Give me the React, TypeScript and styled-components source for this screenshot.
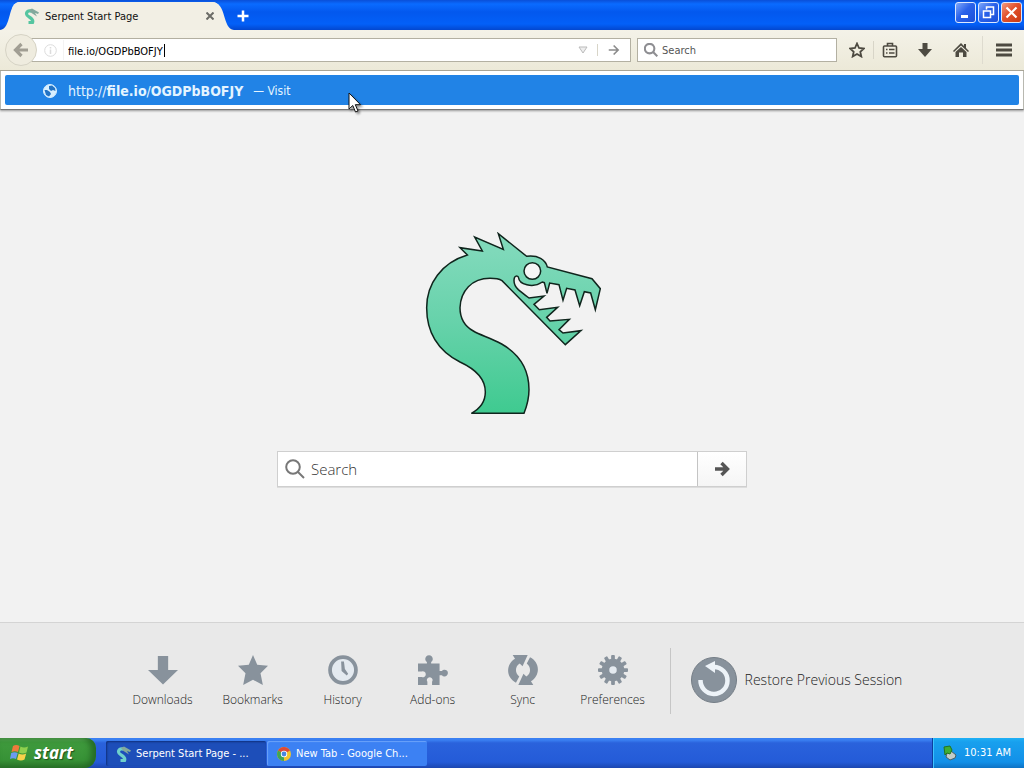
import React from "react";
import styled, { createGlobalStyle, css } from "styled-components";

const GlobalStyle = createGlobalStyle`
  *, *::before, *::after { box-sizing: border-box; }
  body { margin: 0; background: #f2f2f2; }
  button, input { font: inherit; color: inherit; border: 0; padding: 0; margin: 0; background: none; outline: 0; }
  svg { display: block; flex: none; }
`;

const Screen = styled.div`
  min-height: 100vh;
  display: flex;
  flex-direction: column;
  overflow: hidden;
  font: 11px/14px "DejaVu Sans Condensed", "Noto Sans", sans-serif;
  color: #111;
`;

/* Title bar and tabs */

const TitleBar = styled.header`
  height: 30px;
  display: flex;
  align-items: flex-end;
  background: linear-gradient(#0a4fd8 0, #0a6bff 4px, #0358ee 12px, #0360f8 24px, #0347cf 30px);
`;

const Tab = styled.div`
  position: relative;
  z-index: 0;
  height: 28px;
  width: 208px;
  margin-left: 12px;
  padding-left: 12px;
  display: flex;
  align-items: center;
  gap: 6px;
  background: #f2efe4;
  border-radius: 8px 8px 0 0;
`;

const TabEdge = styled.svg<{ $side: "left" | "right" }>`
  position: absolute;
  z-index: -1;
  bottom: 0;
  ${(p) => (p.$side === "left" ? "left: -12px;" : "right: -14px; transform: scaleX(-1);")}
`;

const TabTitle = styled.span`
  flex: 1;
  padding-top: 1px;
  white-space: nowrap;
`;

const IconButton = styled.button<{ $w?: number }>`
  width: ${(p) => p.$w ?? 20}px;
  height: 28px;
  display: flex;
  align-items: center;
  justify-content: center;
`;

const NewTab = styled(IconButton)`
  margin-left: 12px;
  width: 22px;
`;

const MenuButton = styled(IconButton)`
  width: 42px;
  margin-left: 4px;
  border-left: 1px solid #dedbcf;
`;

const WindowButtons = styled.div`
  margin: 0 2px 7px auto;
  display: flex;
  gap: 2px;
`;

const WindowButton = styled.button<{ $close?: boolean }>`
  width: 21px;
  height: 21px;
  display: grid;
  place-items: center;
  border: 1px solid #dce8ff;
  border-radius: 3px;
  background: ${(p) =>
    p.$close
      ? "linear-gradient(135deg, #f09a80, #e2512c 45%, #c93a14)"
      : "linear-gradient(135deg, #7fa8fa, #2a62ea 45%, #1c4fd8)"};
`;

/* Navigation toolbar */

const Toolbar = styled.nav`
  position: relative;
  z-index: 2;
  height: 41px;
  padding-left: 5px;
  display: flex;
  align-items: center;
  background: linear-gradient(#f4f2e8, #ece9d8);
  border-bottom: 1px solid #a9a596;
`;

const BackButton = styled.button`
  position: relative;
  z-index: 1;
  width: 32px;
  height: 32px;
  display: grid;
  place-items: center;
  background: #efecdf;
  border: 1px solid #d6d3c5;
  border-radius: 50%;
`;

const fieldBox = css`
  height: 24px;
  display: flex;
  align-items: center;
  background: #fff;
  border: 1px solid #b3b0a2;
`;

const UrlBar = styled.div`
  ${fieldBox}
  flex: 1;
  margin-left: -6px;
  padding-left: 12px;
`;

const UrlInput = styled.input`
  field-sizing: content;
  margin-left: 6px;
  padding: 2px 1px 0 4px;
  height: 20px;
  border-left: 1px solid #f3f3f3;
  color: #000;
`;

const Caret = styled.span`
  width: 1px;
  height: 13px;
  margin-right: auto;
  background: #000;
`;

const Rule = styled.span<{ $h: number }>`
  width: 1px;
  height: ${(p) => p.$h}px;
  background: #d8d5c8;
`;

const SearchBar = styled.label`
  ${fieldBox}
  width: 200px;
  margin: 0 4px 0 6px;
  padding-left: 6px;
  gap: 4px;

  input { flex: 1; min-width: 0; padding-top: 2px; }
  input::placeholder { color: #555; opacity: 1; }
`;

/* Suggestion popup under the address bar */

const Popup = styled.div`
  position: absolute;
  top: 41px;
  left: 0;
  right: 0;
  padding: 4px;
  background: #fff;
  border: 1px solid #b8b8b0;
  border-top: 0;
  border-bottom-color: #777;
  box-shadow: 0 1px 2px #999;
`;

const Suggestion = styled.a`
  height: 30px;
  padding: 2px 0 0 37px;
  display: flex;
  align-items: center;
  background: #2183e6;
  border-radius: 2px;
  color: #e4f4ff;
  text-decoration: none;
  font-size: 14px;
  line-height: 18px;
`;

const SuggestionUrl = styled.span`
  margin-left: 10px;
`;

const SuggestionAction = styled.span`
  margin-left: 10px;
  font-size: 12px;
`;

/* Start page */

const Main = styled.main`
  flex: 1;
  padding: 161px 16px 24px;
  display: flex;
  flex-direction: column;
  align-items: center;
  background: #f2f2f2;
  font-family: "Open Sans", "Noto Sans", sans-serif;
`;

const SearchForm = styled.form`
  width: 100%;
  max-width: 470px;
  height: 36px;
  margin-top: 36px;
  display: flex;
  background: #fff;
  border: 1px solid #cfcfcf;
  box-shadow: 0 1px 0 #ddd;
`;

const SearchLabel = styled.label`
  flex: 1;
  padding-left: 7px;
  display: flex;
  align-items: center;
  gap: 6px;
  font-size: 15px;
  font-weight: 300;

  input { flex: 1; min-width: 0; height: 32px; }
  input::placeholder { color: #333; opacity: 1; }
`;

const SubmitButton = styled.button`
  width: 49px;
  display: grid;
  place-items: center;
  border-left: 1px solid #c4c4c4;
  background: linear-gradient(#fff, #f5f5f5);
`;

const Launcher = styled.footer`
  height: 116px;
  display: flex;
  justify-content: center;
  align-items: center;
  background: #e9e9e9;
  border-top: 1px solid #d4d4d4;
  color: #222;
  font-family: "Open Sans", "Noto Sans", sans-serif;
  font-weight: 300;
`;

const LaunchButton = styled.button`
  width: 90px;
  padding-top: 2px;
  display: flex;
  flex-direction: column;
  align-items: center;
  gap: 6px;
  font-size: 12px;
  line-height: 18px;
`;

const Restore = styled.button`
  height: 66px;
  margin-left: 12px;
  padding: 0 4px 2px 20px;
  display: flex;
  align-items: center;
  gap: 8px;
  border-left: 1px solid #c6c6c6;
  font-size: 14px;
  line-height: 18px;
  white-space: nowrap;
`;

/* Taskbar */

const Taskbar = styled.div`
  height: 30px;
  display: flex;
  color: #fff;
  background: linear-gradient(#3a80f2 0, #3a80f2 2px, #2a62dc 5px, #245bd8 24px, #1c46b0 30px);
`;

const StartButton = styled.button`
  width: 96px;
  margin-right: 10px;
  padding-left: 10px;
  display: flex;
  align-items: center;
  gap: 4px;
  border-radius: 0 10px 12px 0;
  background: linear-gradient(#5fae5c 0, #3f9a3d 4px, #379236 22px, #2a7429 30px);
  box-shadow: inset -5px 0 6px #256b24;
  font: italic bold 17px/24px "Open Sans", "Noto Sans", sans-serif;
  text-shadow: 1px 1px 1px #1d4f1c;
`;

const Task = styled.button<{ $active?: boolean }>`
  width: 160px;
  height: 25px;
  margin: 3px 1px 0 0;
  padding: 0 8px 0 10px;
  display: flex;
  align-items: center;
  gap: 5px;
  border-radius: 2px;
  white-space: nowrap;
  background: ${(p) => (p.$active ? "#1d4eb9" : "#3c81f3")};
  box-shadow: ${(p) => (p.$active ? "inset 1px 1px 2px #10307c" : "inset 1px 1px 1px #6ba2fa")};
`;

const Tray = styled.div`
  min-width: 92px;
  margin-left: auto;
  padding: 0 12px 0 10px;
  display: flex;
  align-items: center;
  gap: 7px;
  white-space: nowrap;
  border-left: 1px solid #0d3f9e;
  background: linear-gradient(#1eb0f5 0, #18a0ee 4px, #1290e8 24px, #0e72c4 30px);
  box-shadow: inset 1px 0 0 #3cc3ff;
`;

const Pointer = styled.svg`
  position: absolute;
  z-index: 3;
  top: 92px;
  left: 348px;
  filter: drop-shadow(2px 2px 1px #0006);
`;

const SERPENT =
  "M184 579H342C351 556 357 538 357 508C357 438 322 398 275 371C240 351 213 346 190 332C160 315 150 291 150 262C152 212 185 174 240 174C254 174 266 175 276 181L466 373L513 331L459 338L447 328L478 297L420 302L410 291L443 261L388 268L372 252L402 227L357 233C345 225 335 216 325 208C312 196 310 186 313 173C315 165 325 165 326 173C327 190 367 206 397 185L403 187L411 219L419 188L447 193L459 240L470 204L495 209L509 256L523 214L542 218L556 268L571 205L546 175L412 140C406 118 385 104 350 108L265 40L280 87L194 50L217 92L150 82L172 104C95 127 50 190 50 262C50 342 90 394 150 425C202 449 226 480 226 515C226 544 208 566 184 579Z";

const SerpentLogo = () => (
  <svg width="178" height="183" viewBox="39 35 534 549" role="img" aria-label="Serpent">
    <defs>
      <linearGradient id="scales" x1="0" y1="0" x2="0" y2="1">
        <stop offset="0.1" stopColor="#7fd9ba" />
        <stop offset="0.5" stopColor="#66d2aa" />
        <stop offset="1" stopColor="#3fca90" />
      </linearGradient>
    </defs>
    <path d={SERPENT} fill="url(#scales)" stroke="#10251d" strokeWidth="4.5" />
    <circle cx="367" cy="152" r="25" fill="#f6f6f6" stroke="#10251d" strokeWidth="4.5" />
  </svg>
);

const MiniSerpent = ({ color }: { color: string }) => (
  <svg width="15" height="16" viewBox="0 0 15 16">
    <path d="M4.500 14.500H8.500C10.500 10 2.500 9 2.500 6C2.500 3 6 2 8 3.500" fill="none" stroke={color} strokeWidth="3.200" />
    <path d="M5 2L8 .5L15 4.500L14 6L11 5L13 8.500L7.500 5Z" fill="#83a99c" />
  </svg>
);

const Magnifier = ({ size, color, w }: { size: number; color: string; w: number }) => (
  <svg width={size} height={size} viewBox="0 0 20 20" fill="none" stroke={color} strokeWidth={w}>
    <circle cx="8" cy="8" r="6.800" />
    <path d="M13 13L19 19" />
  </svg>
);

const Arrow = ({ size, color, w, flip }: { size: number; color: string; w: number; flip?: boolean }) => (
  <svg width={size} height={size} viewBox="0 0 16 16" fill="none" stroke={color} strokeWidth={w}>
    <path d={flip ? "M15 8H3M8.500 2L2.500 8L8.500 14" : "M1 8H13M7.500 2L13.500 8L7.500 14"} />
  </svg>
);

const ink = "#4d4a41";
const slate = "#88929c";

const gearTeeth = Array.from({ length: 12 }, (_, i) => i * 30);

const syncHalf = "M5 0H21L15.500 12L12.500 9C7.500 12 7 19 12 23L8.500 29.500C-2.500 24-2.500 10 7.500 4Z";

const launchers: { label: string; icon: React.ReactNode }[] = [
  { label: "Downloads", icon: <path d="M10.500 1H21.500V16H32L16 31.500L0 16H10.500Z" /> },
  { label: "Bookmarks", icon: <path d="M16 0L20.500 10.500L32 11.500L24 19.500L26.500 32L16 26.500L5.500 32L8 19.500L0 11.500L11.500 10.500Z" /> },
  {
    label: "History",
    icon: (
      <>
        <circle cx="16" cy="16" r="13.800" fill="#e4eaf0" stroke={slate} strokeWidth="4" />
        <path d="M14 7H17L18 15L21.500 20L20 21.800L14.500 17Z" />
      </>
    ),
  },
  {
    label: "Add-ons",
    icon: (
      <path d="M0 9H9.500V7.500A4 4 0 1 1 14 7.500V9H23V17H25.500A3.600 3.600 0 1 1 25.500 21.500H23V32H15V28.500A3 3 0 1 0 10 28.500V32H0V23.500H4A3.200 3.200 0 1 0 4 17.500H0Z" />
    ),
  },
  {
    label: "Sync",
    icon: (
      <>
        <path d={syncHalf} />
        <path d={syncHalf} transform="rotate(180 16 16)" />
      </>
    ),
  },
  {
    label: "Preferences",
    icon: (
      <>
        {gearTeeth.map((a) => (
          <rect key={a} x="14" y="0" width="4" height="8" rx="1" transform={`rotate(${a} 16 16)`} />
        ))}
        <circle cx="16" cy="16" r="8" fill="#e4eaf0" stroke={slate} strokeWidth="8" />
      </>
    ),
  },
];

export default function App() {
  return (
    <Screen>
      <GlobalStyle />
      <TitleBar>
        <Tab>
          <TabEdge $side="left" width="20" height="28" viewBox="0 0 20 28">
            <path d="M0 28C12 27 7 0 20 0V28Z" fill="#f2efe4" />
          </TabEdge>
          <TabEdge $side="right" width="22" height="28" viewBox="0 0 22 28">
            <path d="M0 28C12 27 7 0 22 0V28Z" fill="#f2efe4" />
          </TabEdge>
          <MiniSerpent color="#55c5a0" />
          <TabTitle>Serpent Start Page</TabTitle>
          <IconButton aria-label="Close tab">
            <svg width="8" height="8" viewBox="0 0 8 8" stroke="#6b6b66" strokeWidth="2">
              <path d="M.5.5L7.500 7.500M7.500.5L.5 7.500" />
            </svg>
          </IconButton>
        </Tab>
        <NewTab aria-label="New tab">
          <svg width="12" height="12" viewBox="0 0 12 12" stroke="#fff" strokeWidth="2.500">
            <path d="M6 .5V11.500M.5 6H11.500" />
          </svg>
        </NewTab>
        <WindowButtons>
          <WindowButton aria-label="Minimize">
            <svg width="15" height="15" viewBox="0 0 15 15"><path d="M3 10H10V13H3Z" fill="#fff" /></svg>
          </WindowButton>
          <WindowButton aria-label="Restore">
            <svg width="15" height="15" viewBox="0 0 15 15" fill="none" stroke="#fff">
              <path d="M5.500 4.500V2H12.500V9.500H10" strokeWidth="1.500" />
              <path d="M2.500 6H9.500V12.500H2.500Z" strokeWidth="1.500" />
            </svg>
          </WindowButton>
          <WindowButton $close aria-label="Close">
            <svg width="15" height="15" viewBox="0 0 15 15" stroke="#fff" strokeWidth="2.200">
              <path d="M2.500 2.500L12.500 12.500M12.500 2.500L2.500 12.500" />
            </svg>
          </WindowButton>
        </WindowButtons>
      </TitleBar>

      <Toolbar>
        <BackButton aria-label="Back"><Arrow size={16} color="#a19e93" w={3.2} flip /></BackButton>
        <UrlBar>
          <svg width="13" height="13" viewBox="0 0 13 13" fill="none" stroke="#dcdcdc">
            <circle cx="6.500" cy="6.500" r="5.800" />
            <path d="M6.500 5.500V10M6.500 3V4.500" strokeWidth="1.500" />
          </svg>
          <UrlInput aria-label="Address" defaultValue="file.io/OGDPbBOFJY" />
          <Caret />
          <IconButton $w={28} aria-label="Show history">
            <svg width="10" height="8" viewBox="0 0 10 8" fill="#eee" stroke="#bbb"><path d="M1 1H9L5 7Z" /></svg>
          </IconButton>
          <Rule $h={12} />
          <IconButton $w={32} aria-label="Go"><Arrow size={12} color="#8b8b8b" w={2.2} /></IconButton>
        </UrlBar>
        <SearchBar>
          <Magnifier size={14} color="#8e8e92" w={3} />
          <input type="text" placeholder="Search" aria-label="Search" />
        </SearchBar>
        <IconButton $w={32} aria-label="Bookmark this page">
          <svg width="16" height="16" viewBox="0 0 16 16" fill="none" stroke={ink} strokeWidth="1.800">
            <path d="M8 1.500L10 6L15 6.500L11.300 9.800L12.300 14.500L8 12L3.700 14.500L4.700 9.800L1 6.500L6 6Z" />
          </svg>
        </IconButton>
        <Rule $h={18} />
        <IconButton $w={32} aria-label="Bookmarks">
          <svg width="16" height="16" viewBox="0 0 16 16" fill="none" stroke={ink}>
            <rect x="1.500" y="4" width="13" height="10.800" rx="1" strokeWidth="1.600" />
            <path d="M5.500 4V1.500H10.500V4" strokeWidth="1.600" />
            <path d="M4 7.500H5.500M7 7.500H12.500M4 11H5.500M7 11H12.500" strokeWidth="1.400" />
          </svg>
        </IconButton>
        <IconButton $w={38} aria-label="Downloads">
          <svg width="16" height="16" viewBox="0 0 16 16" fill={ink}><path d="M5.500 1H10.500V7H15L8 15L1 7H5.500Z" /></svg>
        </IconButton>
        <IconButton $w={34} aria-label="Home">
          <svg width="16" height="16" viewBox="0 0 16 16" fill={ink}>
            <path d="M8 1L11 4V2H13V6L16 9L15 10L8 3.500L1 10L0 9Z" />
            <path d="M8 5L13.500 10V15H10V10.500H6V15H2.500V10Z" />
          </svg>
        </IconButton>
        <MenuButton aria-label="Menu">
          <svg width="16" height="14" viewBox="0 0 16 14" stroke={ink} strokeWidth="3"><path d="M0 2H16M0 7H16M0 12H16" /></svg>
        </MenuButton>
        <Popup>
          <Suggestion href="#">
            <svg width="16" height="16" viewBox="0 0 16 16">
              <circle cx="8" cy="8" r="6.500" fill="#d8efff" stroke="#d8efff" />
              <path d="M7 3L10 2.500L13 5L13.500 8L11 7L9 8L7 6ZM2.500 7L5 7L8 9L9 11L7 13.500L4 12Z" fill="#2373c4" />
            </svg>
            <SuggestionUrl>http://<b>file.io</b>/<b>OGDPbBOFJY</b></SuggestionUrl>
            <SuggestionAction>— Visit</SuggestionAction>
          </Suggestion>
        </Popup>
      </Toolbar>

      <Main>
        <SerpentLogo />
        <SearchForm onSubmit={(e) => e.preventDefault()}>
          <SearchLabel>
            <Magnifier size={20} color="#777" w={2} />
            <input type="text" placeholder="Search" aria-label="Search the web" />
          </SearchLabel>
          <SubmitButton aria-label="Submit search"><Arrow size={16} color="#555" w={3.4} /></SubmitButton>
        </SearchForm>
      </Main>

      <Launcher>
        {launchers.map(({ label, icon }) => (
          <LaunchButton key={label}>
            <svg width="30" height="30" viewBox="0 0 32 32" fill={slate}>{icon}</svg>
            {label}
          </LaunchButton>
        ))}
        <Restore>
          <svg width="46" height="46" viewBox="0 0 46 46">
            <circle cx="23" cy="23" r="22.500" fill={slate} stroke="#747d86" />
            <path d="M9.500 23A13.500 13.500 0 1 0 23 10" fill="none" stroke="#edf3f8" strokeWidth="4.500" />
            <path d="M14 9L24 4V16Z" fill="#edf3f8" />
          </svg>
          Restore Previous Session
        </Restore>
      </Launcher>

      <Taskbar>
        <StartButton>
          <svg width="20" height="20" viewBox="0 0 20 20">
            <path d="M3 3Q6 1 9.500 3L8 9Q5 7.500 1.500 9Z" fill="#ef7a3c" />
            <path d="M10.500 3.500Q14 5.500 18 3.500L16.500 9.500Q12.500 11.500 9 9.500Z" fill="#8fd04e" />
            <path d="M1.200 10Q4.500 8.500 7.700 10L6 16Q3 14.500 0 16Z" fill="#6c9bf0" />
            <path d="M8.700 10.500Q12.500 12.500 16.200 10.500L14.500 16.500Q11 18.500 7 16.500Z" fill="#f8d24a" />
          </svg>
          start
        </StartButton>
        <Task $active>
          <MiniSerpent color="#6fd0cb" />
          Serpent Start Page - ...
        </Task>
        <Task>
          <svg width="14" height="14" viewBox="0 0 14 14">
            <circle cx="7" cy="7" r="7" fill="#f2c32e" />
            <path d="M7 7L1 3.500A7 7 0 0 1 13 3.500Z" fill="#dd4a38" />
            <path d="M7 7L7 14A7 7 0 0 1 1 3.500Z" fill="#3fa556" />
            <circle cx="7" cy="7" r="3.200" fill="#fff" />
            <circle cx="7" cy="7" r="2.400" fill="#4a86e0" />
          </svg>
          New Tab - Google Ch...
        </Task>
        <Tray>
          <svg width="14" height="16" viewBox="0 0 14 16">
            <path d="M4 8L8 6L13 10L12 13L7 15L3 12Z" fill="#c3cdc9" stroke="#4b5f66" />
            <path d="M1 2L7 1L9 5L7 9L4 8L2 10Z" fill="#3fae35" stroke="#23741f" />
          </svg>
          10:31 AM
        </Tray>
      </Taskbar>

      <Pointer width="14" height="22" viewBox="0 0 14 22">
        <path d="M1 1V17L4.800 13.500L7.500 20L10 19L7.300 12.700H12.500Z" fill="#fff" stroke="#111" />
      </Pointer>
    </Screen>
  );
}
